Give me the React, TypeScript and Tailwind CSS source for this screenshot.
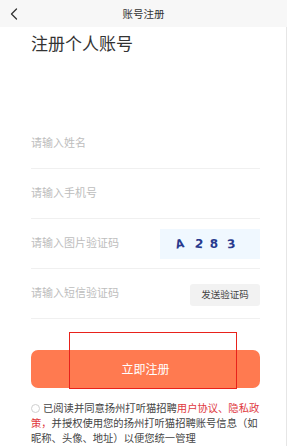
import React, { useState } from 'react';

const font = { fontFamily: '"Noto Sans CJK SC", "Noto Sans", sans-serif' };

const Field: React.FC<{ placeholder: string; children?: React.ReactNode }> = ({ placeholder, children }) => (
  <div className="flex items-center justify-between h-[50px] border-b border-[#f0f0f0]">
    <input
      placeholder={placeholder}
      className="flex-1 min-w-0 pb-[3px] bg-transparent outline-none text-[11px] text-[#333] placeholder:text-[#bdbdbd]"
    />
    {children}
  </div>
);

export default function App() {
  const [agreed, setAgreed] = useState(false);

  return (
    <div className="relative w-[287px] h-[446px] overflow-hidden bg-white" style={font}>
      {/* Nav bar */}
      <div className="relative flex items-center justify-center h-[27px] bg-[#f7f7f7]">
        <button className="absolute left-[9px] top-[8px] text-[#333]">
          <svg width="10" height="12" viewBox="0 0 10 12" fill="none">
            <path d="M7.5 1 L2.5 6 L7.5 11" stroke="#333" strokeWidth="1.3" strokeLinecap="round" strokeLinejoin="round" />
          </svg>
        </button>
        <span className="text-[10.5px] text-[#333]">账号注册</span>
      </div>

      <div className="h-[419px] border-r border-[#e6e6e6] pl-[31px] pr-[26px]">
        <h1 className="pt-[4px] text-[17px] leading-[24px] text-[#333]">注册个人账号</h1>

        <div className="mt-[64px]">
          <Field placeholder="请输入姓名" />
          <Field placeholder="请输入手机号" />
          <Field placeholder="请输入图片验证码">
            <div className="flex items-center w-[100px] h-[30px] bg-[#f0f8ff] pl-[15px] text-[#283a8e] font-bold text-[12px]" style={{ fontFamily: '"DejaVu Sans", sans-serif' }}>
              <span className="inline-block -rotate-12 scale-x-90">A</span>
              <span className="inline-block ml-[11px] rotate-6">2</span>
              <span className="inline-block ml-[6px]">8</span>
              <span className="inline-block ml-[9px] -rotate-6">3</span>
            </div>
          </Field>
          <Field placeholder="请输入短信验证码">
            <button className="w-[70px] h-[22px] rounded-[3px] bg-[#f2f2f2] text-[9.5px] text-[#444] mt-[2px]">
              发送验证码
            </button>
          </Field>
        </div>

        <button className="mt-[31px] w-full h-[38px] rounded-[7px] bg-[#ff7a50] text-white text-[12px]">
          立即注册
        </button>

        <p className="mt-[12px] -mr-[4px] text-[10.3px] leading-[15px] text-[#444] whitespace-nowrap">
          <span
            onClick={() => setAgreed(!agreed)}
            className={`inline-block align-[-1px] w-[9px] h-[9px] mr-[3px] rounded-full border ${agreed ? 'bg-[#ff7a50] border-[#ff7a50]' : 'border-[#cfcfcf]'}`}
          />
          已阅读并同意扬州打听猫招聘<span className="text-[#e0393e]">用户协议、隐私政</span>
          <br />
          <span className="text-[#e0393e]">策，</span>并授权使用您的扬州打听猫招聘账号信息（如
          <br />
          昵称、头像、地址）以便您统一管理
        </p>
      </div>

      {/* annotation box */}
      <div className="absolute left-[69px] top-[332px] w-[168px] h-[57px] border-[1.5px] border-[#e8221b] pointer-events-none" />
    </div>
  );
}
